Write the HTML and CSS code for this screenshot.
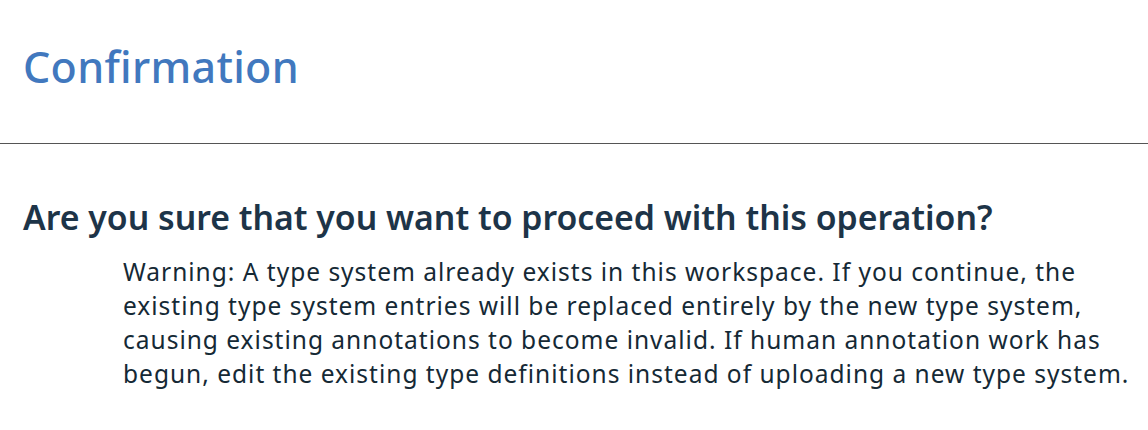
FILE: index.html
```html
<!DOCTYPE html>
<html lang="en">
<head>
<meta charset="utf-8">
<title>Confirmation</title>
<link rel="stylesheet" href="styles.css">
</head>
<body>
<div class="dialog">
  <header class="dialog-header">
    <h1 class="dialog-title">Confirmation</h1>
  </header>
  <section class="dialog-body">
    <h2 class="question">Are you sure that you want to proceed with this operation?</h2>
    <p class="warning">Warning: A type system already exists in this workspace. If you continue, the existing type system entries will be replaced entirely by the new type system, causing existing annotations to become invalid. If human annotation work has begun, edit the existing type definitions instead of uploading a new type system.</p>
  </section>
</div>
</body>
</html>
```
FILE: styles.css
```css
html, body {
  margin: 0;
  padding: 0;
  background: #ffffff;
}
body {
  font-family: "Noto Sans", "Open Sans", "Liberation Sans", sans-serif;
  width: 1148px;
  height: 430px;
  overflow: hidden;
}
.dialog-header {
  height: 144px;
  padding: 0 23px 10px 23px;
  border-bottom: 1px solid #555555;
  display: flex;
  align-items: center;
  box-sizing: border-box;
}
.dialog-title {
  margin: 0;
  font-size: 43px;
  font-weight: 500;
  color: #4178be;
  letter-spacing: 0.3px;
  line-height: 1;
}
.dialog-body {
  padding: 53px 6px 0 23px;
}
.question {
  margin: 0;
  font-size: 33.8px;
  font-weight: 600;
  color: #1d3448;
  line-height: 40px;
}
.warning {
  margin: 18px 0 0 100px;
  font-size: 24.5px;
  letter-spacing: 1px;
  line-height: 34px;
  color: #152935;
}
```
